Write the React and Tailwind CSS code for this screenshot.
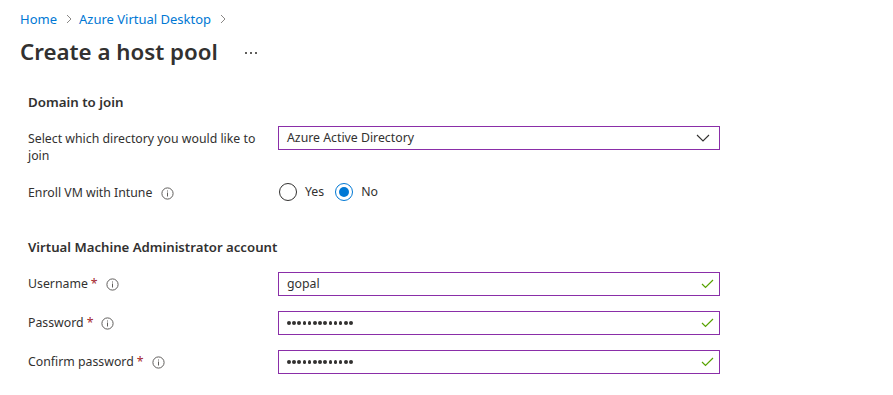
import React from "react";

const font = { fontFamily: '"Segoe UI", "Noto Sans", "Open Sans", sans-serif' };

function Info() {
  return (
    <svg width="13" height="13" viewBox="0 0 13 13" className="shrink-0">
      <circle cx="6.5" cy="6.5" r="5.6" fill="none" stroke="#605e5c" strokeWidth="1" />
      <rect x="6" y="5.5" width="1" height="4" fill="#605e5c" />
      <rect x="6" y="3.5" width="1" height="1" fill="#605e5c" />
    </svg>
  );
}

function Check() {
  return (
    <svg width="13" height="10" viewBox="0 0 13 10">
      <path d="M1 5 L4.5 8.5 L12 1" fill="none" stroke="#57a300" strokeWidth="1.2" />
    </svg>
  );
}

function Req() {
  return <span className="text-[#a4262c] ml-[3px]">*</span>;
}

function InputRow({ label, value, dots }) {
  return (
    <div className="flex items-center h-[24px]">
      <div className="w-[250px] flex items-center text-[12.3px] text-[#323130] pt-[1px]">
        <span>{label}</span>
        <Req />
        <span className="ml-[8px] flex"><Info /></span>
      </div>
      <div className="w-[442px] h-[24px] border border-[#8a2ea8] flex items-center justify-between pl-[8px] pr-[5px]">
        {dots ? (
          <span className="flex gap-[1.6px]">
            {Array.from({ length: 13 }).map((_, i) => (
              <span key={i} className="w-[3.6px] h-[3.6px] rounded-full bg-[#323130] block" />
            ))}
          </span>
        ) : (
          <span className="text-[12.3px] text-[#323130]">{value}</span>
        )}
        <Check />
      </div>
    </div>
  );
}

function Chevron({ className }) {
  return (
    <svg width="8" height="10" viewBox="0 0 8 10" className={className}>
      <path d="M2 1 L6 5 L2 9" fill="none" stroke="#8a8886" strokeWidth="1" />
    </svg>
  );
}

export default function App() {
  return (
    <div className="w-[893px] h-[395px] bg-white overflow-hidden" style={font}>
      <div className="pt-[10px] pl-[20px]">
        <div className="flex items-center text-[13px] leading-[18px] text-[#0078d4]">
          <span>Home</span>
          <Chevron className="ml-[8px] mr-[6px]" />
          <span>Azure Virtual Desktop</span>
          <Chevron className="ml-[8px]" />
        </div>
        <div className="flex items-center mt-[8px] h-[32px]">
          <h1 className="text-[22.3px] leading-[32px] font-semibold text-[#323130]">Create a host pool</h1>
          <span className="ml-[27px] flex gap-[3px] mt-[2px]">
            <span className="w-[2px] h-[2px] bg-[#605e5c] block" />
            <span className="w-[2px] h-[2px] bg-[#605e5c] block" />
            <span className="w-[2px] h-[2px] bg-[#605e5c] block" />
          </span>
        </div>
      </div>

      <div className="pl-[28px]">
        <div className="mt-[24px] text-[13.3px] leading-[20px] font-semibold text-[#323130]">Domain to join</div>

        <div className="flex items-start mt-[14px]">
          <div className="w-[250px] pr-[20px] text-[12.3px] leading-[17px] text-[#323130] pt-[4px]">
            Select which directory you would like to join
          </div>
          <div className="w-[442px] h-[24px] border border-[#8a2ea8] flex items-center justify-between pl-[8px] pr-[9px]">
            <span className="text-[12.3px] text-[#323130]">Azure Active Directory</span>
            <svg width="14" height="8" viewBox="0 0 14 8">
              <path d="M1 1 L7 7 L13 1" fill="none" stroke="#323130" strokeWidth="1.1" />
            </svg>
          </div>
        </div>

        <div className="flex items-center mt-[16px] h-[24px]">
          <div className="w-[250px] flex items-center text-[12.3px] text-[#323130] pt-[3px]">
            <span>Enroll VM with Intune</span>
            <span className="ml-[9px] flex"><Info /></span>
          </div>
          <div className="flex items-center text-[12.3px] text-[#323130] pl-[1px]">
            <span className="w-[18px] h-[18px] rounded-full border border-[#323130] block" />
            <span className="ml-[8px]">Yes</span>
            <span className="ml-[11px] w-[18px] h-[18px] rounded-full border border-[#0078d4] flex items-center justify-center">
              <span className="w-[10px] h-[10px] rounded-full bg-[#0078d4] block" />
            </span>
            <span className="ml-[8px]">No</span>
          </div>
        </div>

        <div className="mt-[33px] text-[13.2px] leading-[20px] font-semibold text-[#323130]">Virtual Machine Administrator account</div>

        <div className="mt-[15px] flex flex-col gap-[15px]">
          <InputRow label="Username" value="gopal" />
          <InputRow label="Password" dots />
          <InputRow label="Confirm password" dots />
        </div>
      </div>
    </div>
  );
}
